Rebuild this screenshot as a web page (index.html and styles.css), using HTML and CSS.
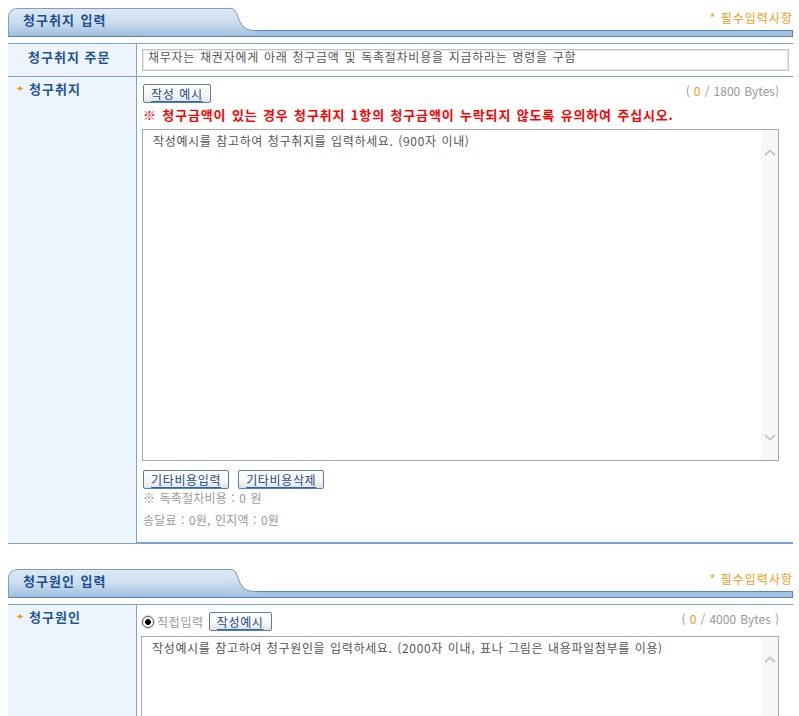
FILE: index.html
```html
<!DOCTYPE html>
<html lang="ko">
<head>
<meta charset="utf-8">
<title>청구취지 입력</title>
<link rel="stylesheet" href="styles.css">
</head>
<body>
<section class="block">
  <div class="sec-head">
    <div class="tab">청구취지 입력</div>
    <svg class="tab-curve" width="30" height="29" viewBox="0 0 30 29">
      <defs>
        <linearGradient id="g1" x1="0" y1="0" x2="0" y2="29" gradientUnits="userSpaceOnUse">
          <stop offset="0" stop-color="#dce8f4"/>
          <stop offset="0.45" stop-color="#cfdfef"/>
          <stop offset="1" stop-color="#a0bfe0"/>
        </linearGradient>
      </defs>
      <path d="M0 0.5 H3 C8 0.5 9 4 11 9 C14 17 17 22.5 28 22.5 H30 V29 H0 Z" fill="url(#g1)"/>
      <path d="M0 0.5 H3 C8 0.5 9 4 11 9 C14 17 17 22.5 28 22.5 H30" fill="none" stroke="#6f95c2" stroke-width="1"/>
      <path d="M0 28.5 H30" stroke="#5a82b2" stroke-width="1"/>
    </svg>
    <div class="head-right">
      <div class="req"><span class="req-star">*</span> 필수입력사항</div>
      <div class="head-bar"></div>
    </div>
  </div>
  <div class="form">
    <div class="row">
      <div class="label label-plain">청구취지 주문</div>
      <div class="value value-input">
        <div class="text-input">채무자는 채권자에게 아래 청구금액 및 독촉절차비용을 지급하라는 명령을 구함</div>
      </div>
    </div>
    <div class="row last">
      <div class="label"><svg class="star" width="6" height="5" viewBox="0 0 6 5"><rect x="0" y="1.8" width="6" height="1.6" fill="#f7a12a"/><rect x="2.3" y="0.4" width="1.4" height="4.2" fill="#ee8a00"/></svg>청구취지</div>
      <div class="value">
        <div class="toolbar">
          <button class="btn" type="button">작성 예시</button>
          <span class="bytes">( <em>0</em> / 1800 Bytes)</span>
        </div>
        <p class="warn">※ 청구금액이 있는 경우 청구취지 1항의 청구금액이 누락되지 않도록 유의하여 주십시오.</p>
        <div class="textarea">
          <div class="ta-text">작성예시를 참고하여 청구취지를 입력하세요. (900자 이내)</div>
          <div class="scroll">
            <svg width="12" height="7" viewBox="0 0 12 7"><polyline points="1,6 6,1.5 11,6" fill="none" stroke="#c6c6c6" stroke-width="2"/></svg>
            <svg width="12" height="7" viewBox="0 0 12 7"><polyline points="1,1 6,5.5 11,1" fill="none" stroke="#c6c6c6" stroke-width="2"/></svg>
          </div>
        </div>
        <div class="btn-row">
          <button class="btn" type="button">기타비용입력</button>
          <button class="btn" type="button">기타비용삭제</button>
        </div>
        <p class="note">※ 독촉절차비용 : 0 원</p>
        <p class="note note2">송달료 : 0원, 인지액 : 0원</p>
      </div>
    </div>
  </div>
</section>

<section class="block">
  <div class="sec-head">
    <div class="tab">청구원인 입력</div>
    <svg class="tab-curve" width="30" height="29" viewBox="0 0 30 29">
      <defs>
        <linearGradient id="g2" x1="0" y1="0" x2="0" y2="29" gradientUnits="userSpaceOnUse">
          <stop offset="0" stop-color="#dce8f4"/>
          <stop offset="0.45" stop-color="#cfdfef"/>
          <stop offset="1" stop-color="#a0bfe0"/>
        </linearGradient>
      </defs>
      <path d="M0 0.5 H3 C8 0.5 9 4 11 9 C14 17 17 22.5 28 22.5 H30 V29 H0 Z" fill="url(#g2)"/>
      <path d="M0 0.5 H3 C8 0.5 9 4 11 9 C14 17 17 22.5 28 22.5 H30" fill="none" stroke="#6f95c2" stroke-width="1"/>
      <path d="M0 28.5 H30" stroke="#5a82b2" stroke-width="1"/>
    </svg>
    <div class="head-right">
      <div class="req"><span class="req-star">*</span> 필수입력사항</div>
      <div class="head-bar"></div>
    </div>
  </div>
  <div class="form">
    <div class="row last">
      <div class="label"><svg class="star" width="6" height="5" viewBox="0 0 6 5"><rect x="0" y="1.8" width="6" height="1.6" fill="#f7a12a"/><rect x="2.3" y="0.4" width="1.4" height="4.2" fill="#ee8a00"/></svg>청구원인</div>
      <div class="value">
        <div class="toolbar">
          <span class="radio"></span>
          <span class="radio-label">직접입력</span>
          <button class="btn btn-sm" type="button">작성예시</button>
          <span class="bytes">( <em>0</em> / 4000 Bytes )</span>
        </div>
        <div class="textarea textarea2">
          <div class="ta-text">작성예시를 참고하여 청구원인을 입력하세요. (2000자 이내, 표나 그림은 내용파일첨부를 이용)</div>
          <div class="scroll">
            <svg width="12" height="7" viewBox="0 0 12 7"><polyline points="1,6 6,1.5 11,6" fill="none" stroke="#c6c6c6" stroke-width="2"/></svg>
            <svg width="12" height="7" viewBox="0 0 12 7"><polyline points="1,1 6,5.5 11,1" fill="none" stroke="#c6c6c6" stroke-width="2"/></svg>
          </div>
        </div>
      </div>
    </div>
  </div>
</section>
</body>
</html>
```

FILE: styles.css
```css
* { box-sizing: border-box; }

body {
  margin: 8px 0 8px 8px;
  width: 785px;
  font-family: "Noto Sans CJK KR", "Noto Sans", sans-serif;
  font-size: 12px;
  line-height: 14px;
  color: #555;
  letter-spacing: 0.65px;
  word-spacing: 0.8px;
  background: #fff;
}

p { margin: 0; }

.block + .block { margin-top: 25px; }

/* section header */
.sec-head {
  display: flex;
  height: 29px;
}

.tab {
  flex: none;
  width: 219px;
  height: 29px;
  border: 1px solid #7d9fc7;
  border-right: none;
  border-bottom-color: #5a82b2;
  border-top-left-radius: 9px;
  background: linear-gradient(#dce8f4, #cfdfef 45%, #a0bfe0);
  padding: 3px 0 0 14px;
  font-size: 13px;
  font-weight: bold;
  line-height: 16px;
  letter-spacing: 1px;
  word-spacing: 1px;
  color: #1c4f92;
}

.tab-curve { display: block; flex: none; }

.head-right {
  flex: 1;
  display: flex;
  flex-direction: column;
  justify-content: flex-end;
}

.req {
  text-align: right;
  color: #f39a10;
  line-height: 14px;
  margin-bottom: 5px;
  padding-right: 0;
  letter-spacing: 1px;
  word-spacing: 0;
}

.req-star { font-size: 12px; }

.head-bar {
  height: 7px;
  border: 1px solid #5b86b8;
  border-left: none;
  background: #a3c2e2;
}

/* form table */
.form {
  margin-top: 6px;
  border-top: 1px solid #79a5dc;
}

.row {
  display: grid;
  grid-template-columns: 129px 1fr;
}

.label {
  background: #eef4fc;
  border-right: 1px solid #79a5dc;
  border-bottom: 1px solid #79a5dc;
  font-size: 13px;
  font-weight: bold;
  color: #1a5597;
  line-height: 16px;
  padding: 4px 0 0 9px;
  letter-spacing: 1px;
  word-spacing: 0;
}

.label-plain { padding: 5px 0 0 20px; }

.star {
  display: inline-block;
  vertical-align: 3px;
  margin-right: 6px;
}

.value {
  border-bottom: 1px solid #79a5dc;
  padding: 7px 14px 15px 6px;
}

.row.last .value { border-bottom-width: 2px; }

.value-input { padding: 5px 4px 5px 5px; }

.text-input {
  height: 22px;
  border: 1px solid #c5c5c5;
  box-shadow: inset 0 0 0 1px #e6e6e6;
  padding: 1px 0 0 5px;
  line-height: 12px;
  color: #555;
  letter-spacing: 0.75px;
  white-space: nowrap;
  overflow: hidden;
}

.toolbar {
  display: flex;
  align-items: flex-start;
  height: 19px;
}

.btn {
  margin: 0;
  height: 19px;
  padding: 0 7px;
  border: 1px solid #5d7ea8;
  border-radius: 2px;
  background: linear-gradient(#ffffff, #f6f6f6 60%, #e1e1e1);
  font: inherit;
  line-height: 16px;
  letter-spacing: inherit;
  word-spacing: inherit;
  color: #1a4a8a;
  text-decoration: underline;
  text-decoration-color: #1e66c8;
  text-underline-offset: 2px;
  cursor: pointer;
}

.btn-sm { margin-left: 5px; }

.bytes {
  margin-left: auto;
  color: #999;
  line-height: 14px;
  letter-spacing: 0;
}

.bytes em { font-style: normal; color: #f39a10; }

.warn {
  margin: 4px 0 6px;
  font-size: 13px;
  font-weight: bold;
  color: #ff0000;
  line-height: 16px;
  letter-spacing: 0.85px;
  word-spacing: 1px;
  white-space: nowrap;
}

.textarea {
  display: flex;
  height: 332px;
  margin-left: -1px;
  border: 1px solid #a9a9a9;
  background: #fff;
}

.textarea2 { margin-top: 5px; margin-left: -2px; }

.ta-text {
  flex: 1;
  padding: 3px 10px;
  line-height: 16px;
  color: #555;
}

.scroll {
  flex: none;
  width: 17px;
  background: #f7f7f7;
  display: flex;
  flex-direction: column;
  justify-content: space-between;
  align-items: center;
  padding: 19px 0;
}

.scroll svg { display: block; }

.btn-row {
  display: flex;
  gap: 9px;
  margin-top: 9px;
}

.note {
  color: #999;
  line-height: 14px;
  margin-top: 2px;
  letter-spacing: 0.2px;
}

.note2 { margin-top: 8px; }

.radio {
  align-self: center;
  margin-left: -1px;
  width: 12px;
  height: 12px;
  border-radius: 50%;
  border: 1px solid #5a5a5a;
  box-shadow: 0 0 0 1px #d8d8d8;
  background: radial-gradient(circle, #000 0 2.6px, #fff 3.2px);
}

.radio-label {
  align-self: center;
  margin-left: 3px;
  color: #999;
  line-height: 14px;
}
```
